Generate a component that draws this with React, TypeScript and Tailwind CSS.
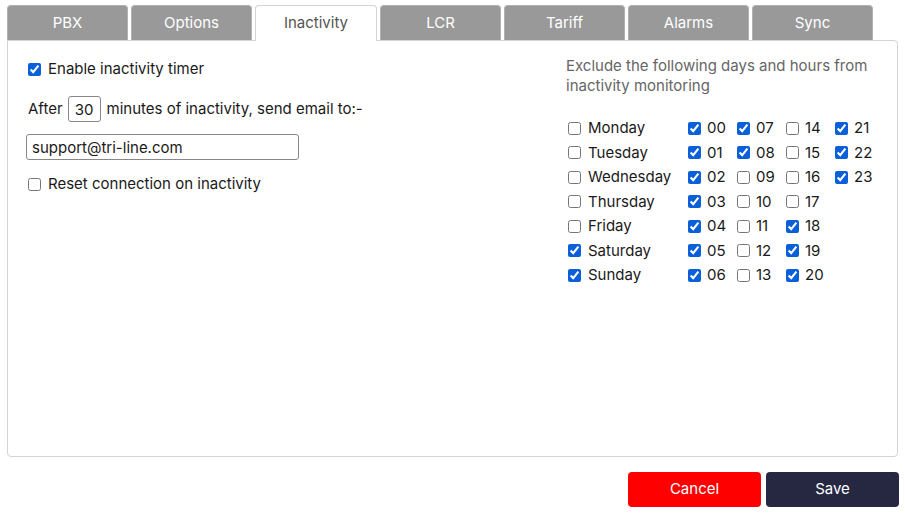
import { useState } from "react";

const tabs = ["PBX", "Options", "Inactivity", "LCR", "Tariff", "Alarms", "Sync"];
const days = ["Monday", "Tuesday", "Wednesday", "Thursday", "Friday", "Saturday", "Sunday"];
const dayOn = [false, false, false, false, false, true, true];
// hours checked in the picture
const hourOn = new Set([0, 1, 2, 3, 4, 5, 6, 7, 8, 18, 19, 20, 21, 22, 23]);

function Box({ checked }: { checked: boolean }) {
  return (
    <input
      type="checkbox"
      defaultChecked={checked}
      className="w-[13px] h-[13px] m-0 accent-[#0b5fd9] shrink-0"
    />
  );
}

export default function App() {
  const [active] = useState("Inactivity");

  return (
    <div className="w-[905px] h-[513px] bg-white text-[15px] text-[#1a1a1a]" style={{ fontFamily: "Inter, 'Noto Sans', sans-serif" }}>
      <div className="pl-[7px] pt-[5px] flex gap-[3px]">
        {tabs.map((t) => (
          <div
            key={t}
            className={
              t === active
                ? "w-[122px] h-[36px] -mb-px z-10 flex items-center justify-center rounded-t-[4px] border border-b-0 border-[#d4d4d4] bg-white text-[#555]"
                : "w-[121px] h-[35px] flex items-center justify-center rounded-t-[4px] border border-[#b0b0b0] border-b-0 bg-[#999999] text-white"
            }
          >
            {t}
          </div>
        ))}
      </div>

      <div className="mx-[7px] w-[891px] h-[417px] border border-[#d4d4d4] rounded-b-[4px] rounded-tr-[4px] flex">
        <div className="w-[540px] pl-[20px] pt-[19px] flex flex-col">
          <label className="flex items-center gap-[7px] h-[19px]">
            <Box checked />
            <span>Enable inactivity timer</span>
          </label>
          <div className="flex items-center mt-[17px] h-[26px]">
            <span>After</span>
            <input
              defaultValue="30"
              className="ml-[5px] w-[33px] h-[26px] border border-[#888] rounded-[3px] text-center outline-none"
            />
            <span className="ml-[6px]">minutes of inactivity, send email to:-</span>
          </div>
          <input
            defaultValue="support@tri-line.com"
            className="mt-[12px] -ml-[2px] w-[273px] h-[26px] border border-[#888] rounded-[3px] px-[5px] outline-none"
          />
          <label className="flex items-center gap-[7px] h-[19px] mt-[15px]">
            <Box checked={false} />
            <span>Reset connection on inactivity</span>
          </label>
        </div>

        <div className="pl-[18px] pt-[15px] flex flex-col">
          <p className="text-[#666] leading-[20px] w-[310px]">
            Exclude the following days and hours from inactivity monitoring
          </p>
          <div className="mt-[20px] flex">
            <div className="flex flex-col w-[122px] pl-[2px]">
              {days.map((d, i) => (
                <label key={d} className="flex items-center gap-[7px] h-[24.5px]">
                  <Box checked={dayOn[i]} />
                  <span>{d}</span>
                </label>
              ))}
            </div>
            {[0, 7, 14, 21].map((start) => (
              <div key={start} className="flex flex-col w-[49px]">
                {Array.from({ length: 7 }, (_, k) => start + k)
                  .filter((h) => h < 24)
                  .map((h) => (
                    <label key={h} className="flex items-center gap-[6px] h-[24.5px]">
                      <Box checked={hourOn.has(h)} />
                      <span>{String(h).padStart(2, "0")}</span>
                    </label>
                  ))}
              </div>
            ))}
          </div>
        </div>
      </div>

      <div className="flex justify-end gap-[5px] pr-[6px] mt-[15px]">
        <button className="w-[133px] h-[35px] rounded-[4px] bg-[#ff0000] text-white">Cancel</button>
        <button className="w-[133px] h-[35px] rounded-[4px] bg-[#262842] text-white">Save</button>
      </div>
    </div>
  );
}
